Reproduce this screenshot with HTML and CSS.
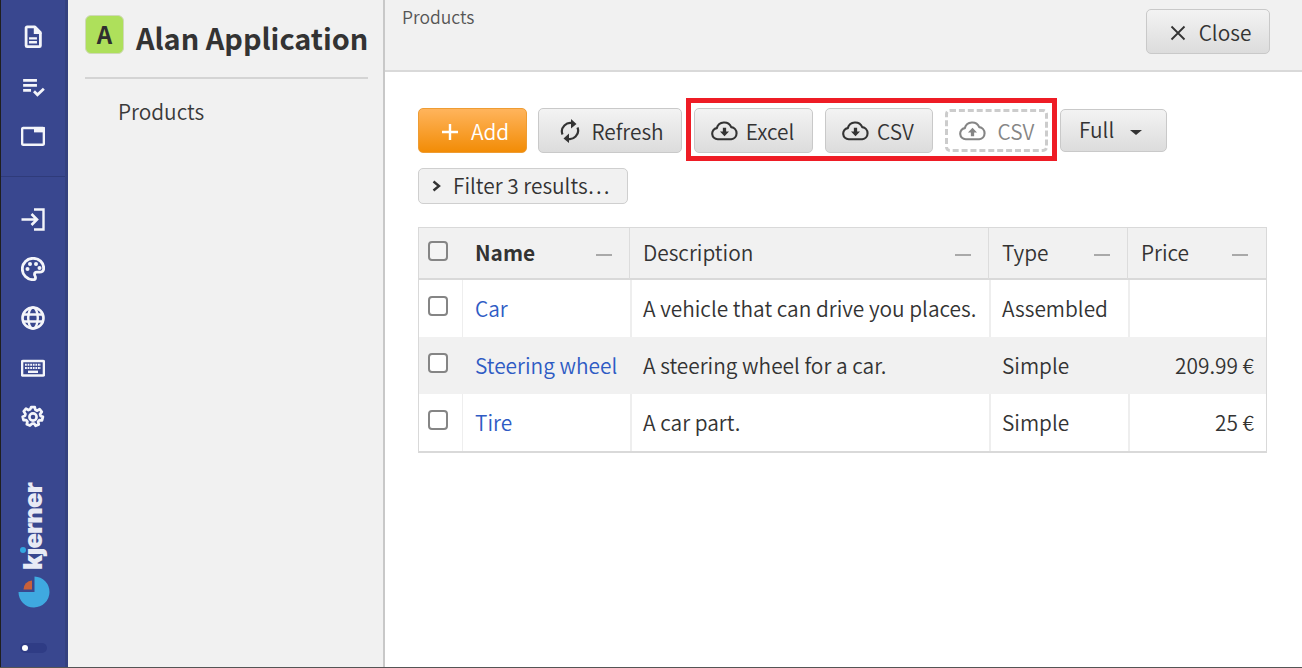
FILE: index.html
```html
<!DOCTYPE html>
<html lang="en">
<head>
<meta charset="utf-8">
<title>Alan Application</title>
<link rel="stylesheet" href="styles.css">
</head>
<body>
<div class="app">
  <nav class="rail">
    <div class="rail-group top">
      <svg class="ico" viewBox="0 0 24 24"><path d="M5 3a1 1 0 0 1 1-1h8l5.500 5.500V21a1 1 0 0 1-1 1H6a1 1 0 0 1-1-1z" fill="none" stroke="#f4f5fa" stroke-width="2.800" stroke-linejoin="round"/><path d="M13.500 2.500V8.500H19.500z" fill="#f4f5fa" stroke="#f4f5fa" stroke-width="1.400"/><path d="M8 13.500h8M8 17.500h8" stroke="#f4f5fa" stroke-width="2.400"/></svg>
      <svg class="ico" viewBox="0 0 24 24"><path d="M2 5.500h14M2 10.500h14M2 15.500h8" stroke="#f4f5fa" stroke-width="2.800" fill="none"/><path d="M13 16.500l3.500 3.500L23 14" stroke="#f4f5fa" stroke-width="2.800" fill="none"/></svg>
      <svg class="ico" viewBox="0 0 24 24"><rect x="1" y="4" width="22" height="17" rx="1" fill="none" stroke="#f4f5fa" stroke-width="2.400"/><path d="M13 3h11v5.500H13z" fill="#f4f5fa"/></svg>
    </div>
    <div class="rail-group mid">
      <svg class="ico" viewBox="0 0 24 24"><path d="M.5 12.500h15M10.500 7l5.500 5.500-5.500 5.500" fill="none" stroke="#f4f5fa" stroke-width="2.600"/><path d="M13 2.500h9.500v20H13" fill="none" stroke="#f4f5fa" stroke-width="2.400"/></svg>
      <svg class="ico" viewBox="0 0 24 24"><path d="M12 1.300C6 1.300 1.300 6.200 1.300 12S6 22.700 12 22.700c1.600 0 2.500-1 2.500-2.300 0-1.300-1-1.700-1-3 0-1.300 1-2.200 2.300-2.200h2.700c2.800 0 4.200-1.700 4.200-4C22.700 5.500 18 1.300 12 1.300z" fill="none" stroke="#f4f5fa" stroke-width="2.800"/><circle cx="6.500" cy="12" r="2" fill="#f4f5fa"/><circle cx="9" cy="7" r="2" fill="#f4f5fa"/><circle cx="15" cy="7" r="2" fill="#f4f5fa"/><circle cx="18.500" cy="11" r="2" fill="#f4f5fa"/></svg>
      <svg class="ico" viewBox="0 0 24 24"><circle cx="12" cy="12" r="10.500" fill="none" stroke="#f4f5fa" stroke-width="2.600"/><ellipse cx="12" cy="12" rx="4.800" ry="10.500" fill="none" stroke="#f4f5fa" stroke-width="2.400"/><path d="M2 8.500h20M2 15.500h20" stroke="#f4f5fa" stroke-width="2.400"/></svg>
      <svg class="ico" viewBox="0 0 24 24"><rect x="1" y="5" width="22" height="14.500" rx="1" fill="none" stroke="#f4f5fa" stroke-width="2.600"/><path d="M4 8.700h16M4 11.900h16" stroke="#f4f5fa" stroke-width="2" stroke-dasharray="1.800 .8"/><path d="M7 15.800h10" stroke="#f4f5fa" stroke-width="2.400"/></svg>
      <svg class="ico" viewBox="0 0 24 24"><path d="M10 1.500h4l.6 3 2 .9 2.700-1.600 2.500 3-1.900 2.400.5 2.100 2.600 1-1 3.800-2.900-.1-1.400 1.700.7 3-3.500 1.500-1.600-2.500h-2.100L8.600 22l-3.500-1.500.7-3-1.400-1.700-2.900.1-1-3.800 2.600-1 .5-2.100L1.700 6.100l2.500-3 2.700 1.600 2-.9z" transform="translate(1.200 .8) scale(.9)" fill="none" stroke="#f4f5fa" stroke-width="3" stroke-linejoin="round"/><circle cx="12" cy="12" r="3.600" fill="none" stroke="#f4f5fa" stroke-width="2.600"/></svg>
    </div>
    <div class="brand">
      <span class="brand-word">kȷerner</span>
      <span class="brand-dot"></span>
      <svg class="brand-pie" viewBox="0 0 32 32"><path d="M16.500.5A15.500 15.500 0 1 1 .5 16h16z" fill="#3fa9e0"/><path d="M14 4.500V13.500H5.500A9 9 0 0 1 14 4.500z" fill="#c9603a"/></svg>
    </div>
    <div class="toggle"><span class="toggle-dot"></span></div>
  </nav>

  <aside class="side">
    <header class="side-head">
      <span class="avatar">A</span>
      <h1 class="app-title">Alan Application</h1>
    </header>
    <div class="side-item">Products</div>
  </aside>

  <main class="main">
    <div class="topbar">
      <span class="crumb">Products</span>
      <button class="btn close-btn">
        <svg class="btn-ico small" viewBox="0 0 16 16"><path d="M1.500 1.500l13 13M14.500 1.500l-13 13" stroke="#333" stroke-width="1.800"/></svg>
        Close
      </button>
    </div>
    <div class="content">
      <div class="toolbar">
        <button class="btn primary add-btn"><svg class="btn-ico small" viewBox="0 0 16 16"><path d="M8 0v16M0 8h16" stroke="#fff" stroke-width="2.400"/></svg>Add</button>
        <button class="btn refresh-btn"><svg class="btn-ico refresh" viewBox="0 0 20 24"><path d="M2.500 15.500A8.500 8.500 0 0 1 13.500 4.500M17.500 8.500A8.500 8.500 0 0 1 6.500 19.500" fill="none" stroke="#333" stroke-width="2.200"/><path d="M11 0v9.500L16.500 5zM9 14.500V24L3.500 19.500z" fill="#333"/></svg>Refresh</button>
        <div class="highlight">
          <button class="btn excel-btn"><svg class="btn-ico cloud" viewBox="0 0 28 20"><path d="M7 18.500a5.800 5.800 0 0 1-1-11.500A8 8 0 0 1 21 6a6.300 6.300 0 0 1 0 12.500z" fill="none" stroke="#333" stroke-width="2.200"/><path d="M12.300 6.500h3.400v4h3L14 15.500l-4.700-5h3z" fill="#333"/></svg>Excel</button>
          <button class="btn csv-btn"><svg class="btn-ico cloud" viewBox="0 0 28 20"><path d="M7 18.500a5.800 5.800 0 0 1-1-11.500A8 8 0 0 1 21 6a6.300 6.300 0 0 1 0 12.500z" fill="none" stroke="#333" stroke-width="2.200"/><path d="M12.300 6.500h3.400v4h3L14 15.500l-4.700-5h3z" fill="#333"/></svg>CSV</button>
          <button class="btn upload-btn"><svg class="btn-ico cloud" viewBox="0 0 28 20"><path d="M7 18.500a5.800 5.800 0 0 1-1-11.500A8 8 0 0 1 21 6a6.300 6.300 0 0 1 0 12.500z" fill="none" stroke="#858585" stroke-width="2.200"/><path d="M12.300 15.500h3.400v-4h3L14 6.500l-4.700 5h3z" fill="#858585"/></svg>CSV</button>
        </div>
        <button class="btn full-btn">Full<span class="caret"></span></button>
      </div>
      <button class="filter"><svg class="filter-ico" viewBox="0 0 10 14"><path d="M1.500 2.500l5.500 4.500-5.500 4.500" fill="none" stroke="#333" stroke-width="2.400"/></svg>Filter 3 results…</button>

      <table class="grid">
        <colgroup>
          <col class="c-check"><col class="c-name"><col class="c-desc"><col class="c-type"><col class="c-price">
        </colgroup>
        <thead>
          <tr>
            <th><span class="check"></span></th>
            <th class="strong"><div class="th-in">Name<span class="dash"></span></div></th>
            <th><div class="th-in">Description<span class="dash"></span></div></th>
            <th><div class="th-in">Type<span class="dash"></span></div></th>
            <th><div class="th-in">Price<span class="dash"></span></div></th>
          </tr>
        </thead>
        <tbody>
          <tr><td><span class="check"></span></td><td><a class="link">Car</a></td><td>A vehicle that can drive you places.</td><td>Assembled</td><td class="num"></td></tr>
          <tr class="alt"><td><span class="check"></span></td><td><a class="link">Steering wheel</a></td><td>A steering wheel for a car.</td><td>Simple</td><td class="num">209.99 €</td></tr>
          <tr><td><span class="check"></span></td><td><a class="link">Tire</a></td><td>A car part.</td><td>Simple</td><td class="num">25 €</td></tr>
        </tbody>
      </table>
    </div>
  </main>
</div>
</body>
</html>
```

FILE: styles.css
```css
* { box-sizing: border-box; }
html, body { margin: 0; height: 100%; overflow: hidden; }
body {
  font-family: "Noto Sans CJK SC", "Noto Sans", sans-serif;
  font-size: 20.850px;
  font-weight: 350;
  color: #333;
  background: #fff;
}
.app { display: flex; height: 668px; border-bottom: 1px solid #555; }

/* rail */
.rail {
  width: 68px; flex: none;
  background: #39478f;
  border-left: 1px solid #1f1f1f;
  border-right: 3px solid #34417f;
  display: flex; flex-direction: column; align-items: center;
}
.rail-group { display: flex; flex-direction: column; align-items: center; width: 100%; }
.rail-group.top { padding: 25px 0 28px; border-bottom: 1px solid #2f3b7a; gap: 26px; height: 177px; }
.rail-group.mid { padding-top: 30px; gap: 25.500px; }
.ico { width: 24px; height: 24px; display: block; }
.brand { position: relative; margin-top: 54px; display: flex; flex-direction: column; align-items: center; }
.brand-word {
  writing-mode: vertical-rl; transform: rotate(180deg);
  font-family: "Inter", sans-serif; font-weight: 900; font-size: 25.500px; line-height: 28px;
  letter-spacing: -.8px;
  color: #e8eaf5;
  height: 87px; text-align: left;
}
.brand-dot {
  position: absolute; left: 3px; top: 64px;
  width: 6px; height: 6px; border-radius: 50%; background: #33a7e0;
}
.brand-pie { width: 32px; height: 32px; margin: 6px 0 0 1px; }
.toggle {
  margin-top: 35px; width: 27px; height: 10px; border-radius: 5px; background: #2f3c85;
  display: flex; align-items: center; padding-left: 2px;
}
.toggle-dot { width: 6px; height: 6px; border-radius: 50%; background: #fff; }

/* sidebar */
.side {
  width: 317px; flex: none;
  background: #f1f1f1;
  border-right: 2px solid #c8c8c8;
  padding: 15px 15px 0 17px;
}
.side-head {
  display: flex; align-items: flex-start; gap: 12px;
  height: 64px; padding-bottom: 16px;
  border-bottom: 2px solid #d4d4d4;
}
.avatar {
  width: 39px; height: 39px; flex: none;
  background: #aee05b; border: 1px solid #cfd9b8; border-radius: 6px;
  font-weight: 700; font-size: 24px; line-height: 35px; text-align: center; color: #2f2f2f;
}
.app-title { margin: 0; font-size: 28.900px; font-weight: 700; line-height: 44px; color: #333; white-space: nowrap; }
.side-item { padding: 13px 0 0 33px; line-height: 38px; color: #3a3a3a; }

/* main */
.main { flex: 1; min-width: 0; display: flex; flex-direction: column; }
.topbar {
  height: 72px; flex: none;
  background: #f1f1f1;
  border-bottom: 2px solid #d9d9d9;
  display: flex; justify-content: space-between; align-items: flex-start;
  padding: 9px 32px 0 17px;
}
.crumb { font-size: 17.500px; line-height: 17px; color: #555; margin-top: -1px; }

.btn {
  font: inherit; color: #333;
  display: inline-flex; align-items: center; justify-content: center;
  height: 45px; padding: 2px 0 0; line-height: 1;
  background: linear-gradient(#f3f3f3, #dcdcdc);
  border: 1px solid #c9c9c9; border-radius: 5px;
  white-space: nowrap;
}
.btn-ico { display: block; flex: none; }
.btn-ico.small { width: 16px; height: 16px; margin-right: 13px; }
.btn-ico.refresh { width: 20px; height: 24px; margin: -2px 11px 0 0; }
.btn-ico.cloud { width: 27px; height: 20px; margin: -2px 8px 0 0; }

.close-btn { width: 124px; padding-left: 5px; }
.content { padding: 36px 35px 0 33px; }
.toolbar { display: flex; align-items: flex-start; }
.add-btn { width: 109px; margin-right: 11px; padding-left: 6px; }
.refresh-btn { width: 144px; padding-left: 4px; }
.primary { background: linear-gradient(#ffb45c, #f28c06); border-color: #ee9c33; color: #fff; }
.highlight {
  display: flex; align-items: flex-start; gap: 12px;
  margin: -10px 3px 0 4px; padding: 5px 4px 5px 3px;
  border: 5px solid #ee1c25; height: 63px;
}
.excel-btn { width: 119px; padding-right: 2px; }
.csv-btn { width: 108px; padding-right: 2px; }
.upload-btn {
  width: 103px; height: 43px; margin-top: 1px;
  background: #fff; border: 3px dashed #cccccc; color: #858585;
}
.upload-btn .cloud { margin-right: 12px; }
.full-btn {
  width: 107px; height: 43px; margin-top: 1px;
  justify-content: flex-start; padding: 0 0 2px 18px;
}
.caret {
  width: 0; height: 0; margin: 6px 0 0 16px;
  border-left: 6px solid transparent; border-right: 6px solid transparent; border-top: 5px solid #333;
}
.filter {
  font: inherit; color: #333; line-height: 1;
  display: flex; align-items: center;
  width: 210px; height: 36px; margin-top: 7px; padding: 0 0 2px 13px;
  background: #f1f1f1; border: 1px solid #cfcfcf; border-radius: 5px;
  white-space: nowrap;
}
.filter-ico { width: 10px; height: 14px; margin: 2px 11px 0 0; flex: none; }

/* table */
.grid {
  width: 849px; margin-top: 23px;
  border-collapse: separate; border-spacing: 0; table-layout: fixed;
  border: 1px solid #d9d9d9; border-bottom: 2px solid #d9d9d9;
}
.c-check { width: 43px; }
.c-name { width: 168px; }
.c-desc { width: 359px; }
.c-type { width: 139px; }
.grid th {
  height: 52px; background: #f1f1f1; font-weight: 350; text-align: left;
  border-bottom: 2px solid #d9d9d9; border-right: 1px solid #dcdcdc;
  padding: 0 13px 2px; line-height: 28px;
}
.grid th:first-child { border-right: 0; padding: 0 0 4px 9px; }
.grid th:last-child { border-right: 0; }
.grid th.strong { font-weight: 700; }
.th-in { display: flex; justify-content: space-between; align-items: center; }
.dash { width: 16px; height: 2px; background: #a9a9a9; margin-right: 4px; margin-top: 5px; }
.grid th:last-child .dash { margin-right: 5px; }
.grid td {
  height: 57px; padding: 0 12px 2px; line-height: 28px; white-space: nowrap;
  border-left: 1px solid #eeeeee;
}
.grid td:first-child { border-left: 0; padding: 0 0 6px 9px; }
.grid td:nth-child(3), .grid td:nth-child(4), .grid td:nth-child(5) { border-left-width: 2px; }
.grid td:nth-child(3), .grid td:nth-child(4) { padding-left: 11px; }
.grid tr.alt td { background: #f1f1f1; border-left-color: #f1f1f1; }
.num { text-align: right; }
.link { color: #2e5bc4; }
.check {
  display: block; width: 20px; height: 20px;
  background: #fff; border: 2px solid #858585; border-radius: 4px;
}
.grid th .check { background: #f4f4f4; }
```
